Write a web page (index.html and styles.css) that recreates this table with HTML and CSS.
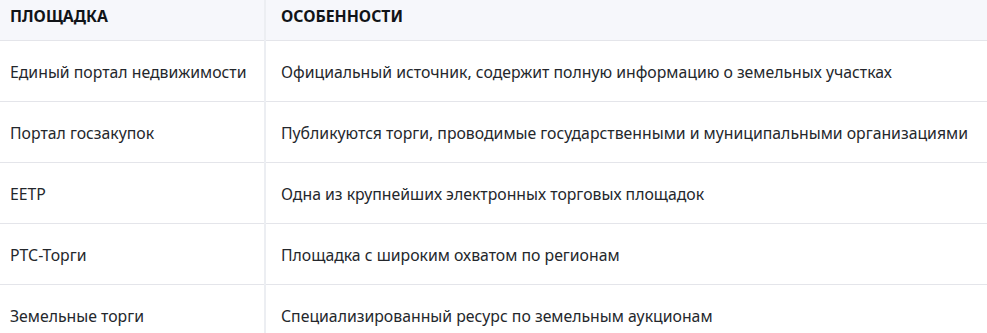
FILE: index.html
```html
<!DOCTYPE html>
<html lang="ru">
<head>
<meta charset="utf-8">
<link rel="stylesheet" href="styles.css">
</head>
<body>
<table class="platforms">
  <thead>
    <tr><th class="col-name">ПЛОЩАДКА</th><th class="col-desc">ОСОБЕННОСТИ</th></tr>
  </thead>
  <tbody>
    <tr><td class="col-name">Единый портал недвижимости</td><td class="col-desc">Официальный источник, содержит полную информацию о земельных участках</td></tr>
    <tr><td class="col-name">Портал госзакупок</td><td class="col-desc">Публикуются торги, проводимые государственными и муниципальными организациями</td></tr>
    <tr><td class="col-name">ЕЕТР</td><td class="col-desc">Одна из крупнейших электронных торговых площадок</td></tr>
    <tr><td class="col-name">РТС-Торги</td><td class="col-desc">Площадка с широким охватом по регионам</td></tr>
    <tr><td class="col-name">Земельные торги</td><td class="col-desc">Специализированный ресурс по земельным аукционам</td></tr>
  </tbody>
</table>
</body>
</html>
```
FILE: styles.css
```css
html, body {
  margin: 0;
  padding: 0;
  background: #ffffff;
}
body {
  font-family: "Noto Sans", "Open Sans", sans-serif;
  color: #24272c;
  overflow: hidden;
}
.platforms {
  border-collapse: collapse;
  width: 1000px;
  table-layout: fixed;
}
.platforms th,
.platforms td {
  text-align: left;
  white-space: nowrap;
  padding: 0 16px;
  border-bottom: 1px solid #e4e5ea;
}
.platforms th {
  background: #f6f7fb;
  font-size: 15.8px;
  font-weight: 700;
  color: #111418;
  height: 40px;
  padding-bottom: 8px;
  box-sizing: border-box;
}
.platforms td {
  font-size: 15.8px;
  height: 61px;
  padding-top: 2px;
  box-sizing: border-box;
}
.platforms .col-name {
  width: 265px;
  padding-left: 10px;
  box-sizing: border-box;
  border-right: 2px solid #eceef2;
}
.platforms .col-desc {
  padding-left: 15px;
}
```
